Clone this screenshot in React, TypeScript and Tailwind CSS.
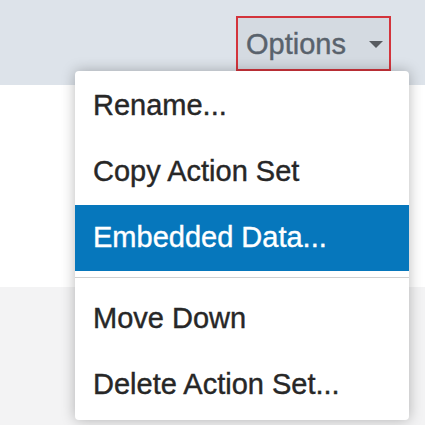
import React from "react";

export default function App() {
  const font = { fontFamily: '"Liberation Sans", Arial, sans-serif' };
  return (
    <div className="relative w-[425px] h-[425px] overflow-hidden flex flex-col" style={font}>
      <div className="h-[85px] bg-[#dde3ea] flex justify-end pr-[34px] pt-[16px]">
        <div className="w-[155px] h-[55px] border-2 border-[#d3343c] bg-[#d4dae1] flex items-center pl-[8px] pr-[4px]">
          <span className="text-[29px] leading-none text-[#59626c] pt-[2px] [-webkit-text-stroke:0.4px_#59626c]">Options</span>
          <svg className="ml-auto mr-[2px] mt-[2px]" width="14" height="8" viewBox="0 0 14 8">
            <path d="M0 0 L14 0 L7 7 Z" fill="#575b60" />
          </svg>
        </div>
      </div>
      <div className="h-[202px] bg-white" />
      <div className="flex-1 bg-[#f3f3f4]" />

      <div className="absolute left-[75px] top-[71px] w-[334px] h-[349px] bg-white rounded-[4px] shadow-[0_0_14px_rgba(0,0,0,0.28)] py-[2px] flex flex-col text-[29px]">
        <div className="h-[66px] flex items-center px-[18px] text-[#272727] [-webkit-text-stroke:0.4px_#272727]">Rename...</div>
        <div className="h-[66px] flex items-center px-[18px] text-[#272727] [-webkit-text-stroke:0.4px_#272727]">Copy Action Set</div>
        <div className="h-[66px] flex items-center px-[18px] text-white bg-[#0677bc] [-webkit-text-stroke:0.4px_#ffffff]">Embedded Data...</div>
        <div className="mt-[6px] mb-[8px] h-px bg-[#d0d0d0]" />
        <div className="h-[66px] flex items-center px-[18px] text-[#272727] [-webkit-text-stroke:0.4px_#272727]">Move Down</div>
        <div className="h-[66px] flex items-center px-[18px] text-[#272727] [-webkit-text-stroke:0.4px_#272727]">Delete Action Set...</div>
      </div>
    </div>
  );
}
